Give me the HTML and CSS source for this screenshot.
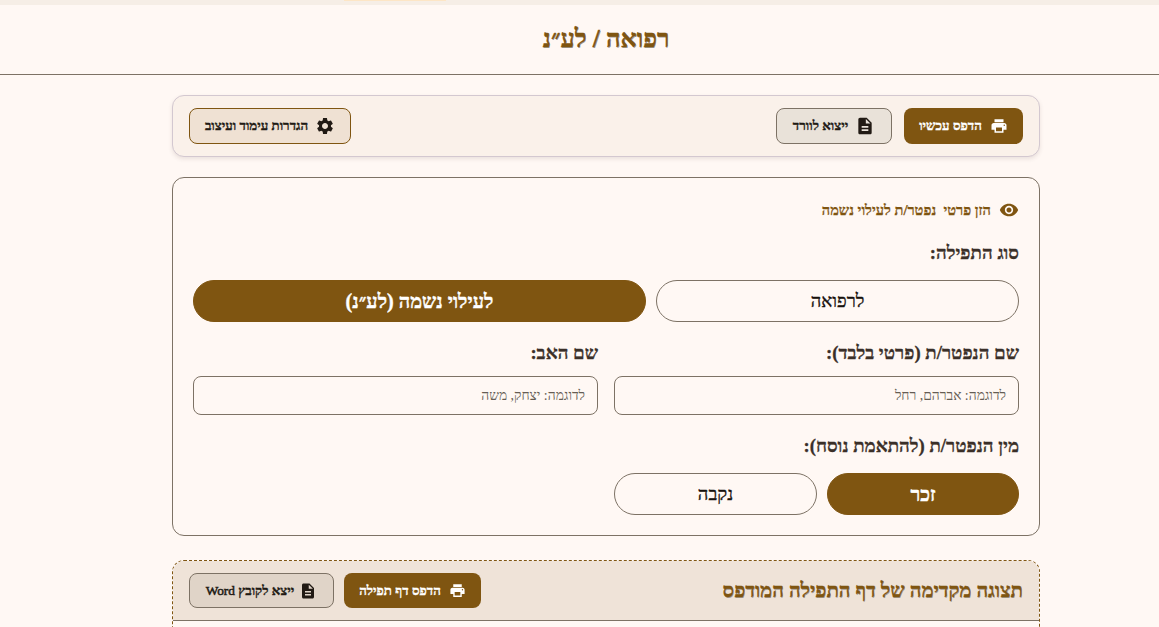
FILE: index.html
```html
<!DOCTYPE html>
<html lang="he">
<head>
<meta charset="utf-8">
<title>רפואה / לע״נ</title>
<link rel="stylesheet" href="styles.css">
</head>
<body>
<div class="page" dir="rtl">
<div class="topbar"><span class="tab-mark"></span></div>
<header class="page-header"><h1>רפואה / לע״נ</h1></header>
<main class="container">
  <section class="toolbar">
    <div class="group">
      <button class="btn btn-primary"><svg class="ic" viewBox="0 0 24 24"><path d="M19 8H5c-1.660 0-3 1.340-3 3v6h4v4h12v-4h4v-6c0-1.660-1.340-3-3-3zm-3 11H8v-5h8v5zm3-7c-.55 0-1-.45-1-1s.45-1 1-1 1 .45 1 1-.45 1-1 1zm-1-9H6v4h12V3z"/></svg>הדפס עכשיו</button>
      <button class="btn btn-soft"><svg class="ic" viewBox="0 0 24 24"><path d="M14 2H6c-1.100 0-1.990.9-1.990 2L4 20c0 1.100.89 2 1.990 2H18c1.100 0 2-.9 2-2V8l-6-6zm2 16H8v-2h8v2zm0-4H8v-2h8v2zm-3-5V3.500L18.500 9H13z"/></svg>ייצוא לוורד</button>
    </div>
    <button class="btn btn-settings"><svg class="ic" viewBox="0 0 24 24"><path d="M19.140 12.940c.04-.3.06-.61.06-.94 0-.32-.02-.64-.07-.94l2.030-1.580c.18-.14.23-.41.12-.61l-1.920-3.320c-.12-.22-.37-.29-.59-.22l-2.390.96c-.5-.38-1.030-.7-1.620-.94l-.36-2.540c-.04-.24-.24-.41-.48-.41h-3.840c-.24 0-.43.17-.47.41l-.36 2.540c-.59.24-1.130.57-1.620.94l-2.390-.96c-.22-.08-.47 0-.59.22L2.740 8.870c-.12.21-.08.47.12.61l2.030 1.580c-.05.3-.09.63-.09.94s.02.64.07.94l-2.030 1.580c-.18.14-.23.41-.12.61l1.920 3.320c.12.22.37.29.59.22l2.390-.96c.5.38 1.030.7 1.620.94l.36 2.540c.05.24.24.41.48.41h3.840c.24 0 .44-.17.47-.41l.36-2.540c.59-.24 1.130-.56 1.620-.94l2.390.96c.22.08.47 0 .59-.22l1.920-3.320c.12-.22.07-.47-.12-.61l-2.010-1.580zM12 15.600c-1.980 0-3.600-1.620-3.600-3.600s1.620-3.600 3.600-3.600 3.600 1.620 3.600 3.600-1.620 3.600-3.600 3.600z"/></svg>הגדרות עימוד ועיצוב</button>
  </section>

  <section class="card">
    <div class="notice"><svg class="eye" viewBox="0 0 24 24"><path d="M12 4.500C7 4.500 2.730 7.610 1 12c1.730 4.390 6 7.500 11 7.500s9.270-3.110 11-7.500c-1.730-4.390-6-7.500-11-7.500zM12 17c-2.760 0-5-2.240-5-5s2.240-5 5-5 5 2.240 5 5-2.240 5-5 5zm0-8c-1.660 0-3 1.340-3 3s1.340 3 3 3 3-1.340 3-3-1.340-3-3-3z"/></svg><span>הזן פרטי&nbsp; נפטר/ת לעילוי נשמה</span></div>
    <h3 class="label label-type">סוג התפילה:</h3>
    <div class="type-row">
      <button class="pill">לרפואה</button>
      <button class="pill pill-on">לעילוי נשמה (לע״נ)</button>
    </div>
    <div class="fields">
      <div class="field">
        <label class="label">שם הנפטר/ת (פרטי בלבד):</label>
        <input class="input" placeholder="לדוגמה: אברהם, רחל">
      </div>
      <div class="field">
        <label class="label">שם האב:</label>
        <input class="input" placeholder="לדוגמה: יצחק, משה">
      </div>
    </div>
    <h3 class="label label-gender">מין הנפטר/ת (להתאמת נוסח):</h3>
    <div class="gender-row">
      <button class="pill pill-on">זכר</button>
      <button class="pill">נקבה</button>
    </div>
  </section>

  <section class="preview">
    <div class="preview-head">
      <h2>תצוגה מקדימה של דף התפילה המודפס</h2>
      <div class="group group-small">
        <button class="btn btn-primary btn-small"><svg class="ic" viewBox="0 0 24 24"><path d="M19 8H5c-1.660 0-3 1.340-3 3v6h4v4h12v-4h4v-6c0-1.660-1.340-3-3-3zm-3 11H8v-5h8v5zm3-7c-.55 0-1-.45-1-1s.45-1 1-1 1 .45 1 1-.45 1-1 1zm-1-9H6v4h12V3z"/></svg>הדפס דף תפילה</button>
        <button class="btn btn-soft btn-small"><svg class="ic" viewBox="0 0 24 24"><path d="M14 2H6c-1.100 0-1.990.9-1.990 2L4 20c0 1.100.89 2 1.990 2H18c1.100 0 2-.9 2-2V8l-6-6zm2 16H8v-2h8v2zm0-4H8v-2h8v2zm-3-5V3.500L18.500 9H13z"/></svg><span>ייצא לקובץ <span class="latin">Word</span></span></button>
      </div>
    </div>
  </section>
</main>
</div>
</body>
</html>
```
FILE: styles.css
```css
* { box-sizing: border-box; }
html, body { margin: 0; padding: 0; height: 100%; overflow: hidden; }
body {
  background: #fff8f4;
  color: #3a2f28;
  font-family: "Liberation Serif", "DejaVu Serif", serif;
}
.page { width: 1212px; }
.topbar { height: 5px; background: #f6eee6; display: flex; direction: ltr; }
.tab-mark { width: 102px; height: 1px; margin-left: 344px; background: #fde6c6; }
.page-header { height: 70px; border-bottom: 1px solid #7d7265; display: flex; align-items: center; justify-content: center; padding-bottom: 1px; }
.page-header h1 { margin: 0; font-size: 25.2px; font-weight: 700; color: #7f5511; -webkit-text-stroke: .35px #7f5511; text-shadow: .6px .6px .6px rgba(40,40,40,.45); }
.container { width: 868px; margin: 20px auto 0; }
.toolbar {
  height: 62px; background: #faf1ea; border: 1px solid #d3c8d0; border-radius: 12px;
  box-shadow: 0 2px 4px rgba(80,60,60,.12);
  display: flex; align-items: center; justify-content: space-between; padding: 0 16px;
}
.group { display: flex; gap: 12px; align-items: center; }
.btn {
  height: 36px; display: inline-flex; align-items: center; gap: 7px; justify-content: center;
  border-radius: 8px; font-family: inherit; font-weight: 700; font-size: 13.33px; padding: 0;
  border: 1px solid transparent; color: #211a14; white-space: nowrap;
  -webkit-text-stroke: .35px currentColor;
}
.btn-primary { background: #7f5511; color: #fff; width: 119px; gap: 8px; }
.btn-soft { background: #e9e2d9; border-color: #7d7265; width: 116px; }
.btn-settings { background: #efe1d3; border-color: #7f5511; width: 162px; }
.ic { width: 20px; height: 20px; fill: currentColor; flex: none; }
.btn-primary .ic { width: 18px; height: 18px; }
.card { margin-top: 20px; height: 359px; border: 1px solid #7d7265; border-radius: 12px; padding: 20px; }
.notice { display: flex; align-items: center; gap: 8px; height: 24px; font-size: 14.6px; font-weight: 700; color: #7f5511; -webkit-text-stroke: .25px #7f5511; }
.eye { width: 20px; height: 20px; fill: #7f5511; flex: none; }
.label { display: block; margin: 0; font-size: 18.72px; font-weight: 700; color: #3a2f28; line-height: 24px; -webkit-text-stroke: .3px #3a2f28; }
.label-type { margin-top: 19px; }
.type-row { display: grid; grid-template-columns: 363px 453px; gap: 10px; margin-top: 15px; }
.pill {
  height: 42px; border-radius: 21px; border: 1px solid #7d7265; background: #fff8f4; color: #17110c;
  font-family: inherit; font-size: 18.4px; padding: 0; -webkit-text-stroke: .35px #17110c;
}
.pill-on { background: #7f5511; border-color: #7f5511; color: #fff; font-weight: 700; font-size: 20px; -webkit-text-stroke: .4px #fff; }
.fields { display: grid; grid-template-columns: 405px 405px; gap: 16px; margin-top: 19px; }
.field { display: flex; flex-direction: column; gap: 11px; }
.input {
  height: 39px; width: 100%; border: 1px solid #7d7265; border-radius: 8px; background: #fff8f4;
  font-family: inherit; font-size: 13.8px; padding: 0 12px;
}
.input::placeholder { color: #655c53; opacity: 1; }
.label-gender { margin-top: 19px; }
.gender-row { display: grid; grid-template-columns: 192px 203px; gap: 10px; margin-top: 15px; }
.preview { margin-top: 24px; height: 200px; border: 1px dashed #7f5511; border-radius: 12px; overflow: hidden; }
.preview-head { height: 60px; background: #efe3d8; border-bottom: 1px solid #7d7265; display: flex; align-items: center; justify-content: space-between; padding: 0 16px; }
.preview-head h2 { margin: 0; font-size: 20.3px; font-weight: 700; color: #7f5511; -webkit-text-stroke: .3px #7f5511; text-shadow: .5px .5px .5px rgba(40,40,40,.4); }
.group-small { gap: 10px; }
.btn-small { height: 35px; }
.btn-small .ic { width: 18px; height: 18px; }
.btn-primary.btn-small .ic { width: 17px; height: 17px; }
.btn-small.btn-primary { width: 137px; }
.btn-small.btn-soft { width: 145px; background: #e0d4c8; gap: 5px; }
.latin { font-weight: 400; -webkit-text-stroke: .5px currentColor; }
```
